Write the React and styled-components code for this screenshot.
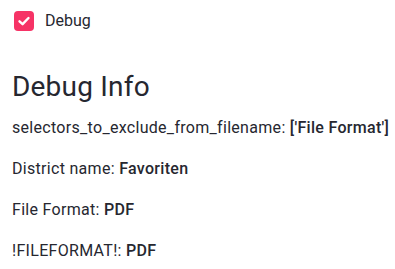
import React from "react";
import styled, { createGlobalStyle } from "styled-components";

const GlobalStyle = createGlobalStyle`
  body {
    margin: 0;
    background: #fff;
    color: #262730;
    font-family: Roboto, "Noto Sans", sans-serif;
  }
`;

const Page = styled.div`
  display: flex;
  flex-direction: column;
  padding: 9px 0 0 12px;
`;

const CheckRow = styled.label`
  display: flex;
  align-items: center;
  gap: 11px;
  padding-left: 2px;
  font-size: 16px;
  line-height: 24px;
`;

const Box = styled.span`
  display: flex;
  align-items: center;
  justify-content: center;
  width: 20px;
  height: 20px;
  border-radius: 4px;
  background: ${(p) => (p.checked ? "#f63366" : "#fff")};
`;

const Heading = styled.h2`
  margin: 36px 0 11px 0;
  font-size: 28px;
  font-weight: 400;
  line-height: 36px;
  letter-spacing: 0.2px;
`;

const Line = styled.p`
  margin: 0 0 17px 0;
  font-size: 16px;
  line-height: 24px;
  letter-spacing: 0.3px;
  white-space: nowrap;

  b {
    font-weight: 500;
  }
`;

const rows = [
  ["selectors_to_exclude_from_filename", "['File Format']"],
  ["District name", "Favoriten"],
  ["File Format", "PDF"],
  ["!FILEFORMAT!", "PDF"],
];

export default function App() {
  return (
    <Page>
      <GlobalStyle />
      <CheckRow>
        <Box checked>
          <svg width="14" height="14" viewBox="0 0 14 14">
            <path d="M2.5 7.3 L5.6 10.2 L11.5 4" fill="none" stroke="#fff" strokeWidth="2.4" strokeLinecap="round" strokeLinejoin="round" />
          </svg>
        </Box>
        Debug
      </CheckRow>
      <Heading>Debug Info</Heading>
      {rows.map(([k, v]) => (
        <Line key={k}>
          {k}: <b>{v}</b>
        </Line>
      ))}
    </Page>
  );
}
